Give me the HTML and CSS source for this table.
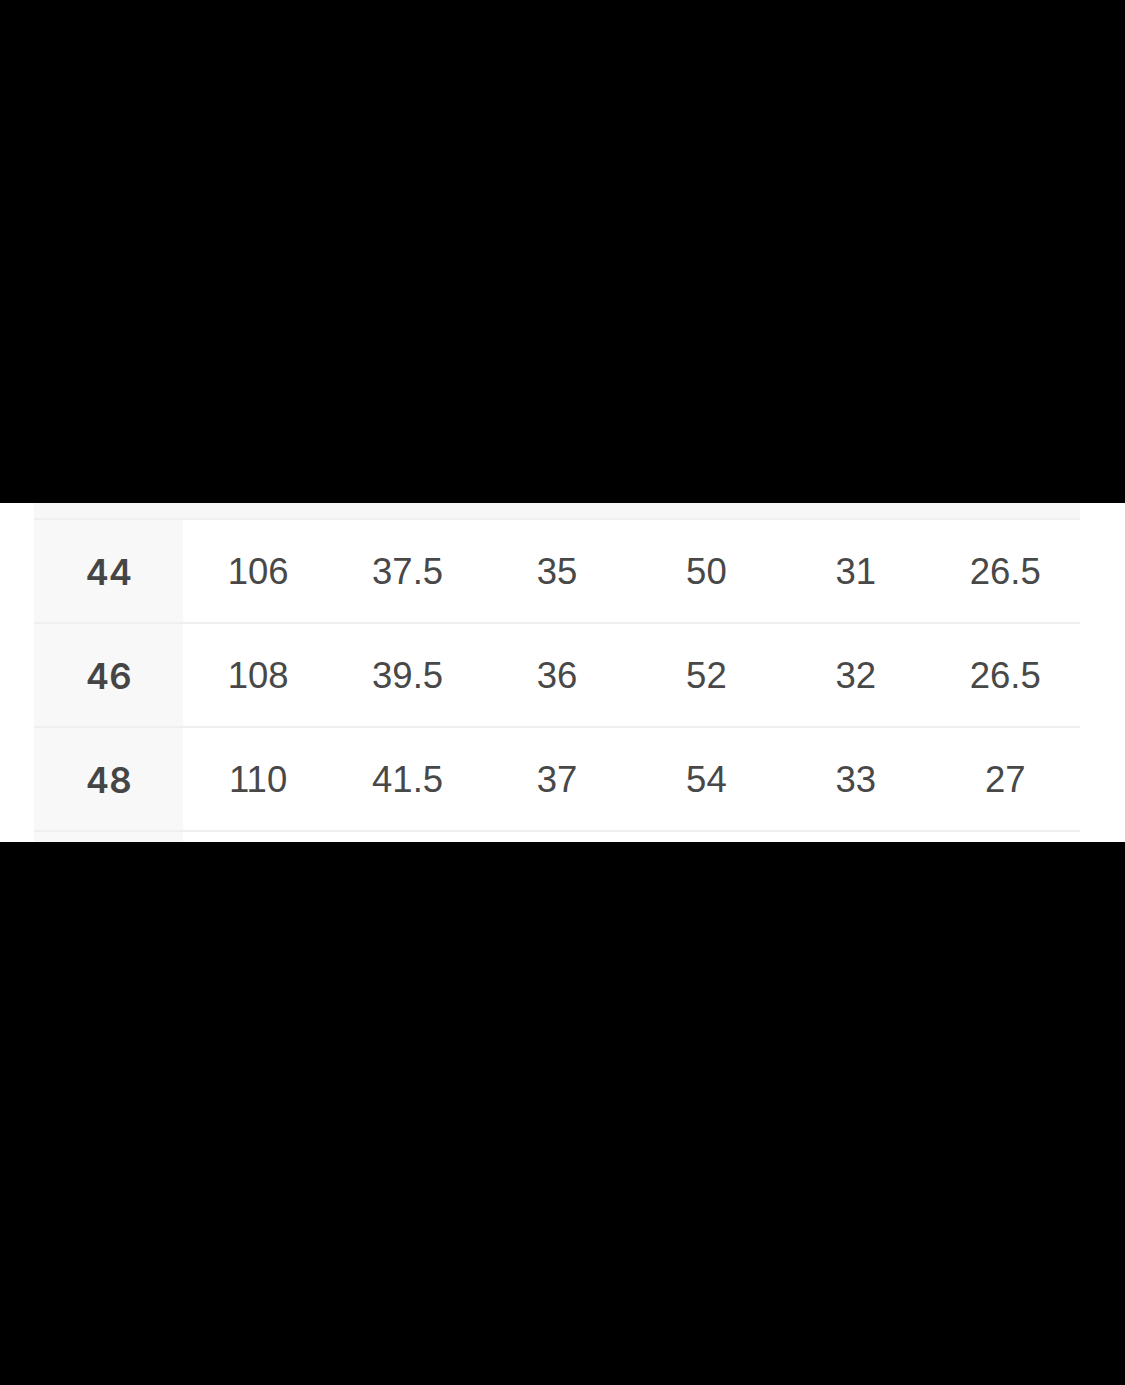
FILE: index.html
```html
<!DOCTYPE html>
<html>
<head>
<meta charset="utf-8">
<link rel="stylesheet" href="styles.css">
</head>
<body>
<div class="band">
  <div class="table">
    <div class="row strip">
      <div class="cell"></div><div class="cell"></div><div class="cell"></div><div class="cell"></div><div class="cell"></div><div class="cell"></div><div class="cell"></div>
    </div>
    <div class="row">
      <div class="cell head">44</div><div class="cell">106</div><div class="cell">37.5</div><div class="cell">35</div><div class="cell">50</div><div class="cell">31</div><div class="cell">26.5</div>
    </div>
    <div class="row">
      <div class="cell head">46</div><div class="cell">108</div><div class="cell">39.5</div><div class="cell">36</div><div class="cell">52</div><div class="cell">32</div><div class="cell">26.5</div>
    </div>
    <div class="row">
      <div class="cell head">48</div><div class="cell">110</div><div class="cell">41.5</div><div class="cell">37</div><div class="cell">54</div><div class="cell">33</div><div class="cell">27</div>
    </div>
    <div class="row tail">
      <div class="cell head"></div><div class="cell"></div><div class="cell"></div><div class="cell"></div><div class="cell"></div><div class="cell"></div><div class="cell"></div>
    </div>
  </div>
</div>
</body>
</html>
```

FILE: styles.css
```css
html, body {
  margin: 0;
  padding: 0;
  background: #000;
}
body {
  width: 1125px;
  height: 1385px;
  overflow: hidden;
  font-family: "Liberation Sans", Arial, sans-serif;
}
.band {
  margin-top: 503px;
  height: 339px;
  background: #fff;
  overflow: hidden;
  padding-left: 34px;
}
.table {
  width: 1046px;
  display: flex;
  flex-direction: column;
}
.row {
  display: grid;
  grid-template-columns: repeat(7, 1fr);
  height: 104px;
  border-bottom: 2px solid #efefef;
  box-sizing: border-box;
}
.strip {
  height: 17px;
}
.strip .cell {
  background: #f7f7f7;
}
.tail {
  height: 20px;
  border-bottom: none;
}
.cell {
  display: flex;
  align-items: center;
  justify-content: center;
  font-size: 36.5px;
  color: #484848;
  padding-top: 1px;
}
.head {
  background: #f8f8f8;
  font-family: Inter, "Liberation Sans", sans-serif;
  font-weight: 600;
  font-size: 35px;
  color: #454545;
}
```
